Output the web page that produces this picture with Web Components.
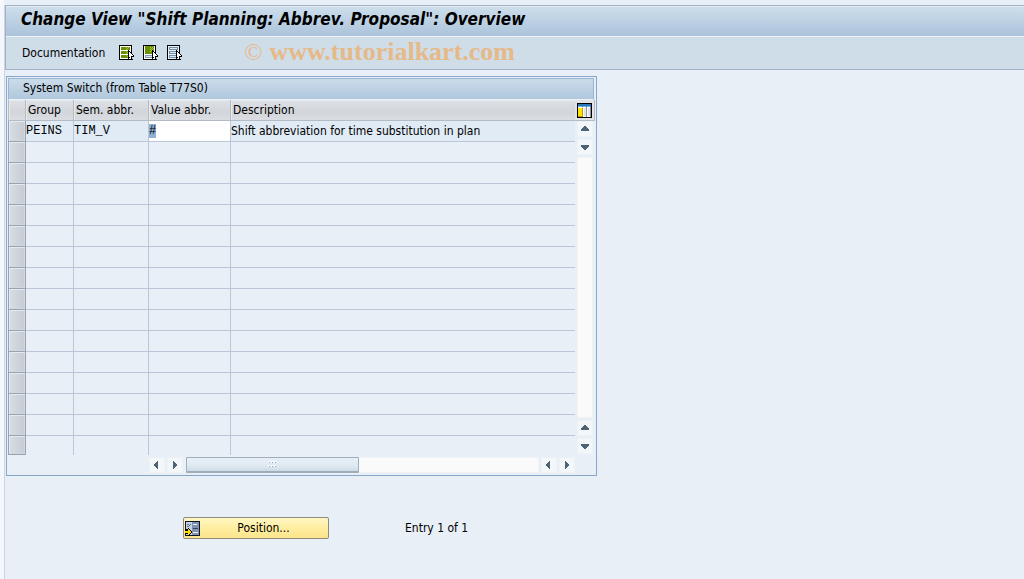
<!DOCTYPE html>
<html lang="en">
<head>
<meta charset="utf-8">
<meta name="viewport" content="width=device-width, initial-scale=1">
<title>Change View "Shift Planning: Abbrev. Proposal": Overview</title>
<style>
  :root {
    --color-page: #e8eff6;
    --color-line: #9fb4c8;
    --color-grid: #bcc6d6;
    --font-ui: "DejaVu Sans Condensed", "DejaVu Sans", sans-serif;
    --font-mono: "Liberation Mono", monospace;
  }

  body {
    margin: 0;
    min-height: 100vh;
    background: var(--color-page);
    color: #000;
    font: 12px/16px var(--font-ui);
  }
</style>
</head>
<body>
<app-screen>
  <title-bar slot="header">Change View "Shift Planning: Abbrev. Proposal": Overview</title-bar>
  <app-toolbar slot="header">
    <tool-button>Documentation</tool-button>
    <tool-button icon="select-all" label="Select all"></tool-button>
    <tool-button icon="select-block" label="Select block"></tool-button>
    <tool-button icon="deselect-all" label="Deselect all"></tool-button>
    <span slot="mark">©</span>
    <span slot="watermark">www.tutorialkart.com</span>
  </app-toolbar>
  <table-control caption="System Switch (from Table T77S0)" rows="16"></table-control>
  <position-bar slot="footer" action="Position...">Entry 1 of 1</position-bar>
</app-screen>

<script>
class AppScreen extends HTMLElement {
  constructor() {
    super();
    this.attachShadow({ mode: "open" });
  }

  connectedCallback() {
    this.shadowRoot.innerHTML = `
      <style>
        :host {
          display: block;
          box-sizing: border-box;
          min-height: 100vh;
          padding: 5px 0 0 4px;
          background: linear-gradient(to right, #f4f7fb 4px, transparent 4px);
        }

        .frame {
          box-sizing: border-box;
          min-height: calc(100vh - 5px);
          border-left: 1px solid #cdd5e4;
        }

        header {
          border: solid #a3b1c6;
          border-width: 1px 0 1px 1px;
        }

        main {
          padding: 6px 0 0 1px;
        }
      </style>
      <div class="frame">
        <header><slot name="header"></slot></header>
        <main><slot></slot></main>
        <slot name="footer"></slot>
      </div>
    `;
  }
}

class TitleBar extends HTMLElement {
  constructor() {
    super();
    this.attachShadow({ mode: "open" });
  }

  connectedCallback() {
    this.shadowRoot.innerHTML = `
      <style>
        :host {
          display: block;
          padding: 2px 15px 7px;
          border-top: 1px solid #e4ebf3;
          border-bottom: 1px solid #f1f5f9;
          background: linear-gradient(#cddeeb, #abc3db);
        }

        h1 {
          margin: 0;
          font: italic bold 17px/20px var(--font-ui);
          white-space: nowrap;
        }
      </style>
      <h1><slot></slot></h1>
    `;
  }
}

class AppToolbar extends HTMLElement {
  constructor() {
    super();
    this.attachShadow({ mode: "open" });
  }

  connectedCallback() {
    this.shadowRoot.innerHTML = `
      <style>
        :host {
          display: flex;
          align-items: center;
          height: 32px;
          padding-left: 16px;
          background: #cfdde8;
        }

        nav {
          display: flex;
          align-items: center;
          gap: 8px;
        }

        .watermark {
          display: flex;
          gap: 7px;
          margin: 0 0 2px 61px;
          color: #e6b989;
          font: bold 26px/28px "Liberation Serif", serif;
          white-space: nowrap;
        }

        .mark {
          font-size: 24px;
          font-weight: normal;
        }
      </style>
      <nav><slot></slot></nav>
      <div class="watermark">
        <span class="mark"><slot name="mark"></slot></span>
        <slot name="watermark"></slot>
      </div>
    `;
  }
}

const TOOL_ICONS = {
  "select-all": `
    <path fill="#fff" d="M1 1h11v13H1z"/>
    <path fill="#6a8f00" d="M2 2h9v3H2zM2 6h9v3H2zM2 10h9v3H2z"/>
    <path fill="#a5c63c" d="M7 2h1v1H7zM9 2h1v1H9zM8 3h1v1H8zM7 4h1v1H7zM7 6h1v1H7zM9 6h1v1H9zM8 7h1v1H8zM7 8h1v1H7zM7 10h1v1H7zM8 11h1v1H8z"/>`,
  "select-block": `
    <path fill="#fff" d="M1 1h11v13H1z"/>
    <path fill="#6a8f00" d="M2 1h9v8H2z"/>
    <path fill="#a5c63c" d="M7 2h1v1H7zM9 2h1v1H9zM8 3h1v1H8zM10 3h1v1h-1zM7 4h1v1H7zM9 4h1v1H9zM8 5h1v1H8zM7 6h1v1H7zM9 6h1v1H9z"/>
    <path fill="#7f9cb4" d="M2 10h9v3H2z"/><path fill="#dfe9f1" d="M3 11h7v1H3z"/>`,
  "deselect-all": `
    <path fill="#e8eff5" d="M1 1h11v13H1z"/>
    <path fill="#7090aa" d="M2 2h9v3H2zM2 6h9v3H2zM2 10h9v3H2z"/>
    <path fill="#dfe9f1" d="M3 3h7v1H3zM3 7h7v1H3zM3 11h7v1H3z"/>`
};

class ToolButton extends HTMLElement {
  constructor() {
    super();
    this.attachShadow({ mode: "open" });
  }

  connectedCallback() {
    const icon = TOOL_ICONS[this.getAttribute("icon")];
    const label = this.getAttribute("label");

    this.shadowRoot.innerHTML = `
      <style>
        :host {
          display: block;
        }

        :host(:first-child) {
          margin-right: 6px;
        }

        button {
          display: block;
          padding: 0;
          border: 0;
          background: none;
          color: inherit;
          font: inherit;
        }

        svg {
          display: block;
        }
      </style>
      <button type="button">${icon ? `
        <svg width="16" height="16" viewBox="0 0 16 16" shape-rendering="crispEdges" aria-hidden="true">
          <path d="M0 0h13v15H0z"/>
          ${icon}
          <path d="M9 5h1v1h1v1h1v1h1v1h1v1h1v2h-2v2h1v1h-3v-2h-1v1H9z"/>
          <path fill="#fff" d="M10 7h1v1h1v1h1v1h1v1h-2v3h-1v-2h-1z"/>
        </svg>` : "<slot></slot>"}</button>
    `;
    if (label) {
      this.shadowRoot.querySelector("button").setAttribute("aria-label", label);
    }
  }
}

class ScrollStrip extends HTMLElement {
  constructor() {
    super();
    this.attachShadow({ mode: "open" });
  }

  connectedCallback() {
    const vertical = this.getAttribute("direction") === "vertical";
    const back = vertical
      ? { name: "Up", path: "M6 4h2v1h1v1h1v1h1v2H3V7h1V6h1V5h1z" }
      : { name: "Left", path: "M8 3H7v1H6v1H5v1H4v2h1v1h1v1h1v1h1z" };
    const next = vertical
      ? { name: "Down", path: "M3 5h8v2h-1v1H9v1H8v1H6V9H5V8H4V7H3z" }
      : { name: "Right", path: "M5 3h1v1h1v1h1v1h1v2H8v1H7v1H6v1H5z" };
    const button = ({ name, path }) => `
      <button type="button" aria-label="Scroll ${name.toLowerCase()}">
        <svg width="14" height="14" viewBox="0 0 14 14" aria-hidden="true"><path fill="#4c6475" d="${path}"/></svg>
      </button>`;

    this.shadowRoot.innerHTML = `
      <style>
        :host {
          display: flex;
          gap: 2px;
        }

        :host([direction="vertical"]) {
          flex-direction: column;
        }

        button {
          box-sizing: border-box;
          flex: none;
          width: 16px;
          height: 16px;
          padding: 0;
          border: 1px solid #edf2f7;
          background: #f4f7fa;
        }

        svg {
          display: block;
        }

        .track {
          flex: 1;
          display: flex;
          background: #fafafa;
          box-shadow: inset 0 0 0 1px #f0f3f6;
        }

        .thumb {
          box-sizing: border-box;
          display: flex;
          align-items: center;
          justify-content: center;
          width: 49%;
          height: 16px;
          margin-left: 1px;
          border: 1px solid #a0aebb;
          border-bottom-width: 2px;
          border-radius: 1px;
          background: linear-gradient(#e8f0f6, #dfe9f1 60%, #cddae6);
        }
      </style>
      ${button(back)}
      ${button(next)}
      <div class="track">${vertical ? "" : `
        <div class="thumb">
          <svg width="9" height="7" viewBox="0 0 9 7" shape-rendering="crispEdges" aria-hidden="true">
            <path fill="#fff" d="M0 0h2v2H0zM3 0h2v2H3zM6 0h2v2H6zM0 4h2v2H0zM3 4h2v2H3zM6 4h2v2H6z"/>
            <path fill="#8fa0b0" d="M1 1h1v1H1zM4 1h1v1H4zM7 1h1v1H7zM1 5h1v1H1zM4 5h1v1H4zM7 5h1v1H7z"/>
          </svg>
        </div>`}
      </div>
      ${button(back)}
      ${button(next)}
    `;
  }
}

class TableControl extends HTMLElement {
  constructor() {
    super();
    this.attachShadow({ mode: "open" });
  }

  connectedCallback() {
    this.render();
    const input = this.shadowRoot.querySelector("input");
    input.focus({ preventScroll: true });
    input.select();
  }

  render() {
    const rows = Number(this.getAttribute("rows")) || 1;
    const selector = n => `<td class="selector"><button type="button" aria-label="Select row ${n}"></button></td>`;
    let emptyRows = "";
    for (let n = 2; n <= rows; n++) {
      emptyRows += `<tr>${selector(n)}<td></td><td></td><td></td><td></td></tr>`;
    }

    this.shadowRoot.innerHTML = `
      <style>
        :host {
          display: block;
          box-sizing: border-box;
          width: 591px;
          max-width: 100%;
          padding: 1px;
          border: 1px solid #86a7ca;
        }

        h2 {
          margin: 0 1px 0 0;
          padding: 1px 14px 3px;
          border: 1px solid #9ab5d1;
          border-bottom-color: #e9f0f6;
          background: linear-gradient(#cbdcea, #b0c7dd);
          font: inherit;
        }

        .grid {
          display: flex;
        }

        table {
          flex: 1;
          table-layout: fixed;
          border-collapse: separate;
          border-spacing: 0;
        }

        .col-selector { width: 18px; }
        .col-group { width: 48px; }
        .col-sem { width: 75px; }
        .col-value { width: 82px; }

        th, td {
          box-sizing: border-box;
          height: 21px;
          padding: 0;
          border-right: 1px solid var(--color-grid);
          border-bottom: 1px solid var(--color-grid);
          text-align: left;
          font-weight: normal;
          white-space: nowrap;
        }

        th {
          padding: 0 2px;
          border-color: #b4bbc4;
          background: linear-gradient(#dde0e4, #d2d6db 60%, #dadde1);
          box-shadow: inset 1px 1px #e7eaed;
        }

        th:first-child {
          border-left: 1px solid #b4bbc4;
        }

        th:last-child, td:last-child {
          border-right: 0;
        }

        tr:last-child td {
          height: 19px;
          border-bottom: 0;
        }

        tr.filled td {
          background: #e0ebf5;
        }

        td.code {
          font-family: var(--font-mono);
        }

        td.selector {
          padding: 0;
          border: 0;
        }

        td.selector button {
          display: block;
          box-sizing: border-box;
          width: 18px;
          height: 21px;
          padding: 0;
          border: 1px solid #98a3b1;
          border-top-width: 0;
          background: linear-gradient(to right, #d9dde3, #c6ccd4);
          box-shadow: inset 1px 1px #e6e9ed, inset -1px -1px #d4d8de;
        }

        tbody tr:last-child td.selector button {
          height: 19px;
        }

        tr.filled td.edit {
          background: #fff;
        }

        input {
          display: block;
          box-sizing: border-box;
          width: 100%;
          height: 20px;
          padding: 0;
          border: 0;
          outline: 0;
          background: transparent;
          color: inherit;
          font: 12px/14px var(--font-mono);
        }

        input::selection {
          background: #8fb0d3;
          color: #000;
        }

        .side {
          display: flex;
          flex-direction: column;
          width: 20px;
        }

        .configure {
          display: block;
          box-sizing: border-box;
          height: 21px;
          padding: 2px;
          border: 0;
          border-right: 1px solid #b4bbc4;
          border-bottom: 1px solid #b4bbc4;
          background: #e0e3e7;
        }

        .configure svg {
          display: block;
        }

        .side scroll-strip {
          flex: 1;
          width: 16px;
          padding: 0 2px 1px;
        }

        .horizontal {
          padding: 2px 20px 1px 141px;
        }
      </style>
      <h2 id="caption"></h2>
      <div class="grid">
        <table aria-labelledby="caption">
          <colgroup>
            <col class="col-selector"><col class="col-group"><col class="col-sem"><col class="col-value"><col>
          </colgroup>
          <thead>
            <tr>
              <th></th>
              <th scope="col">Group</th>
              <th scope="col">Sem. abbr.</th>
              <th scope="col" id="value">Value abbr.</th>
              <th scope="col">Description</th>
            </tr>
          </thead>
          <tbody>
            <tr class="filled">
              ${selector(1)}
              <td class="code">PEINS</td>
              <td class="code">TIM_V</td>
              <td class="edit"><input type="text" value="#" aria-labelledby="value"></td>
              <td>Shift abbreviation for time substitution in plan</td>
            </tr>
            ${emptyRows}
          </tbody>
        </table>
        <div class="side">
          <button class="configure" type="button" aria-label="Configuration">
            <svg width="15" height="15" viewBox="0 0 15 15" shape-rendering="crispEdges" aria-hidden="true">
              <path d="M0 0h15v15H0z"/>
              <path fill="#fff" d="M1 1h13v13H1z"/>
              <path fill="#2c78b8" d="M1 1h13v3H1z"/>
              <path fill="#7fb2dc" d="M1 3h4v1H1zM6 3h3v1H6zM10 3h3v1h-3z"/>
              <path fill="#ffe600" d="M1 5h4v8H1z"/>
              <path fill="#b59b00" d="M5 5h1v8H5zM1 13h5v1H1z"/>
              <path fill="#dfe3e8" d="M7 5h2v8H7zM11 5h2v8h-2z"/>
              <path fill="#8f98a3" d="M9 4h1v10H9zM13 4h1v10h-1z"/>
            </svg>
          </button>
          <scroll-strip direction="vertical"></scroll-strip>
        </div>
      </div>
      <div class="horizontal"><scroll-strip direction="horizontal"></scroll-strip></div>
    `;
    this.shadowRoot.querySelector("#caption").textContent = this.getAttribute("caption");
  }
}

class PositionBar extends HTMLElement {
  constructor() {
    super();
    this.attachShadow({ mode: "open" });
  }

  connectedCallback() {
    this.shadowRoot.innerHTML = `
      <style>
        :host {
          display: flex;
          align-items: center;
          gap: 76px;
          padding: 41px 0 0 178px;
        }

        button {
          display: flex;
          align-items: center;
          width: 146px;
          height: 22px;
          padding: 0 1px;
          border: 1px solid #8e8a7c;
          border-radius: 2px;
          background: linear-gradient(#fff6c4, #ffeea0 50%, #fbe48c);
          color: inherit;
          font: inherit;
        }

        .label {
          flex: 1;
        }
      </style>
      <button type="button">
        <svg width="15" height="15" viewBox="0 0 15 15" shape-rendering="crispEdges" aria-hidden="true">
          <path fill="#101624" d="M0 0h15v15H0z"/>
          <path fill="#c3d3e2" d="M1 1h6v13H1z"/>
          <path fill="#8092b4" d="M7 1h7v13H7z"/>
          <path fill="#e8eef6" d="M8 3h4v1H8zM8 11h5v1H8z"/>
          <path fill="#39455e" d="M8 7h5v1H8z"/>
          <path fill="#5c6c86" d="M2 3h2v1H2zM4 4h1v1H4zM5 3h1v1H5zM2 5h2v1H2z"/>
          <path d="M0 8h3V7h1v1h1v1h1v1h1v2H6v1H5v1H4v1H3v-2H0z"/>
          <path fill="#ffdc00" d="M0 10h3V8h1v1h1v1h1v2H5v1H4v1H3v-2H0z"/>
        </svg>
        <span class="label"></span>
      </button>
      <span><slot></slot></span>
    `;
    this.shadowRoot.querySelector(".label").textContent = this.getAttribute("action");
  }
}

customElements.define("app-screen", AppScreen);
customElements.define("title-bar", TitleBar);
customElements.define("app-toolbar", AppToolbar);
customElements.define("tool-button", ToolButton);
customElements.define("scroll-strip", ScrollStrip);
customElements.define("table-control", TableControl);
customElements.define("position-bar", PositionBar);
</script>
</body>
</html>
